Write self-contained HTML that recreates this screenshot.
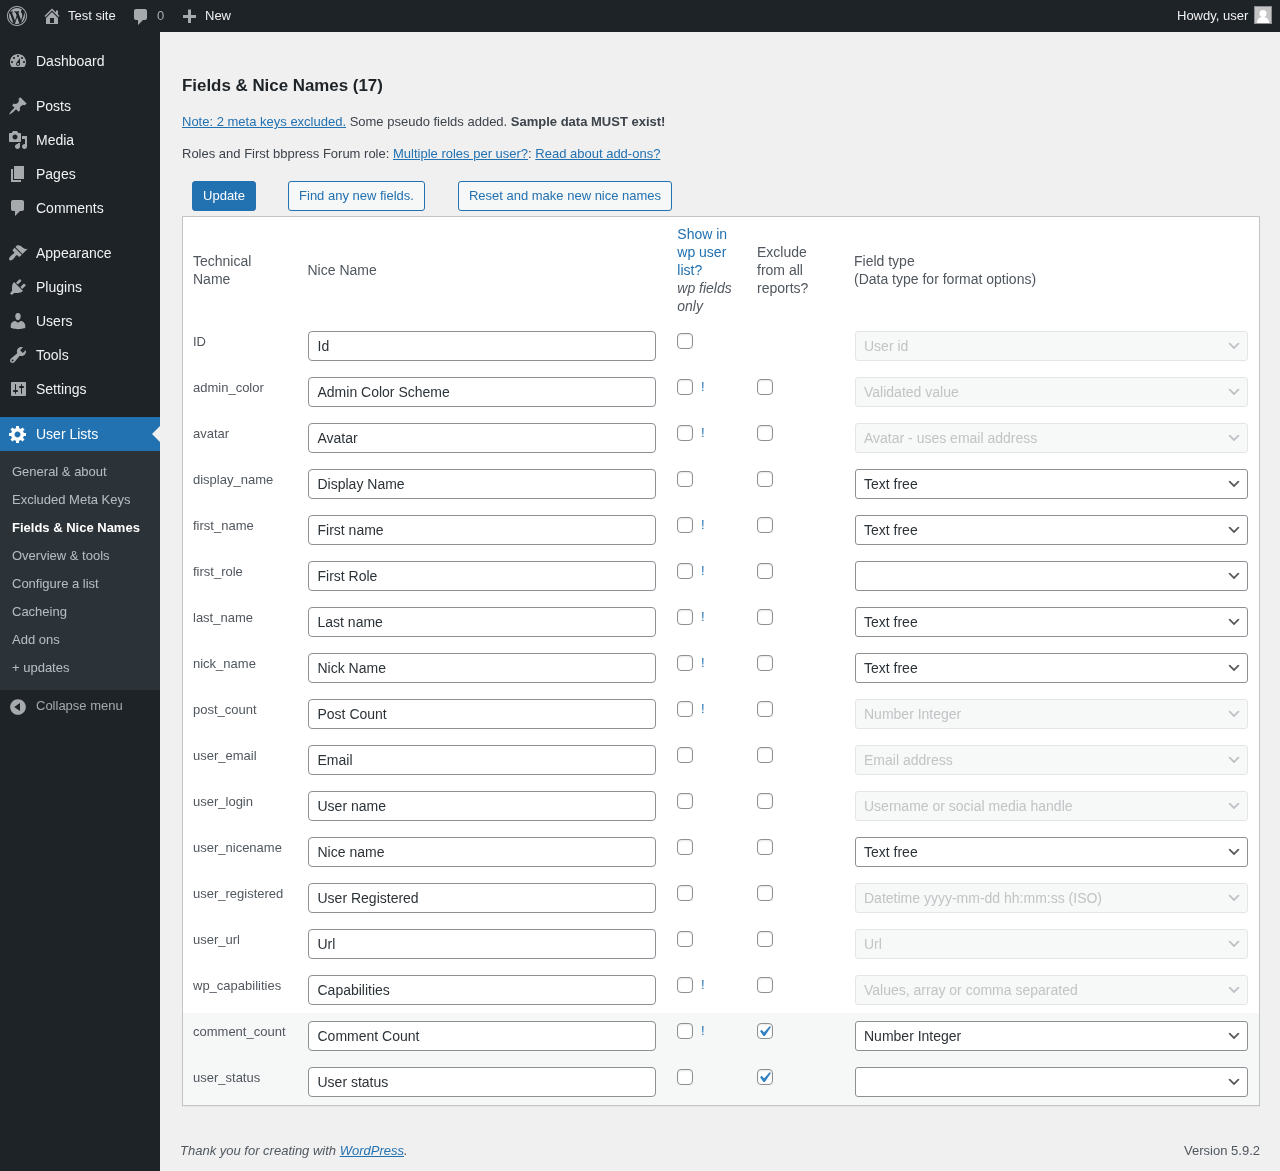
<!DOCTYPE html>
<html><head><meta charset="utf-8">
<style>
*{box-sizing:border-box}
html,body{margin:0;padding:0}
body{width:1280px;height:1171px;overflow:hidden;position:relative;background:#f0f0f1;font-family:"Liberation Sans",sans-serif;font-size:13px;color:#3c434a;}
.abs{position:absolute}
#bar{position:absolute;left:0;top:0;width:1280px;height:32px;background:#1d2327;color:#f0f0f1;font-size:13px;line-height:32px}
#side{position:absolute;left:0;top:32px;width:160px;height:1139px;background:#1d2327}
.mi{position:absolute;left:0;width:160px;height:34px;color:#f0f0f1;font-size:14px;line-height:18.2px}
.mi .t{position:absolute;left:36px;top:8px;white-space:nowrap}
.mi svg{position:absolute;left:8px;top:7px;width:20px;height:20px;fill:#a7aaad}
.sub{position:absolute;left:0;top:451px;width:160px;height:239px;background:#2c3338}
.si{position:absolute;left:12px;font-size:13px;line-height:18px;color:rgba(240,246,252,.7);white-space:nowrap}
a{color:#2271b1;text-decoration:underline}
.btn{position:absolute;top:181px;height:30px;border:1px solid #2271b1;border-radius:3px;background:#f6f7f7;color:#2271b1;font-size:13px;line-height:28px;text-align:center;white-space:nowrap}
.btn.pri{background:#2271b1;color:#fff}
#tbl{position:absolute;left:182px;top:216px;width:1078px;height:890px;border:1px solid #c3c4c7;background:#fff;box-shadow:0 1px 1px rgba(0,0,0,.04)}
.hd{position:absolute;line-height:18px;font-size:14px;color:#50575e;white-space:nowrap}
.row{position:absolute;left:0;width:1076px;height:46px}
.row.alt{background:#f6f7f7}
.tn{position:absolute;left:10px;top:9px;line-height:19.5px;color:#50575e;white-space:nowrap}
.inp{position:absolute;left:125px;top:8px;width:348px;height:30px;border:1px solid #8c8f94;border-radius:4px;background:#fff;color:#2c3338;font-size:14px;line-height:28px;padding-left:8.5px;white-space:nowrap}
.cb{position:absolute;top:10px;width:16px;height:16px;border:1px solid #8c8f94;border-radius:4px;background:#fff;box-shadow:inset 0 1px 2px rgba(0,0,0,.1)}
.cb svg{position:absolute;left:-4px;top:-3px;width:21px;height:21px}
.ex{position:absolute;left:518px;top:8px;color:#2271b1;line-height:19.5px;font-size:13px}
.sel{position:absolute;left:672px;top:8px;width:393px;height:30px;border:1px solid #8c8f94;border-radius:3px;background:#fff;color:#2c3338;font-size:14px;line-height:28px;padding-left:8px;white-space:nowrap}
.sel.dis{background:#f7f8f8;border-color:#e5e5e7;color:#c1c3c5}
.sel svg{position:absolute;right:5px;top:6px;width:16px;height:16px;fill:#555}
.sel.dis svg{fill:#bcbfc3}
</style></head><body>
<div id="root" style="position:absolute;left:0;top:0;width:1280px;height:1171px;will-change:transform">

<div id="bar">
  <svg class="abs" style="left:7px;top:6px;width:20px;height:20px;fill:#a7aaad" viewBox="0 0 20 20"><path d="M20 10c0-5.52-4.48-10-10-10S0 4.48 0 10s4.48 10 10 10 10-4.48 10-10zM10 1.01c4.97 0 8.99 4.02 8.99 8.99s-4.02 8.99-8.99 8.99S1.01 14.97 1.01 10 5.03 1.01 10 1.01zM8.01 14.82L4.96 6.61c.49-.03 1.050-.08 1.05-.08.43-.05.38-1.01-.06-.99 0 0-1.29.1-2.13.1-.15 0-.33 0-.52-.01 1.44-2.17 3.9-3.6 6.7-3.6 2.09 0 3.99.79 5.41 2.09-.6-.08-1.45.35-1.45 1.42 0 .66.38 1.22.79 1.88.31.54.5 1.22.5 2.21 0 1.34-1.27 4.48-1.27 4.480l-2.71-7.5c.48-.03.75-.16.75-.16.43-.05.38-1.1-.05-1.08 0 0-1.3.11-2.14.11-.78 0-2.11-.11-2.11-.11-.43-.02-.48 1.06-.05 1.08l.84.08 1.12 3.04zm6.02 2.15L16.64 10s.67-1.69.39-3.81c.63 1.14.94 2.42.94 3.81 0 2.96-1.56 5.58-3.94 6.97zM2.68 6.77L6.5 17.25c-2.67-1.3-4.47-4.08-4.47-7.25 0-1.16.2-2.23.65-3.23zm7.45 4.53l2.29 6.25c-.75.27-1.57.42-2.42.42-.72 0-1.41-.11-2.06-.3z"/></svg>
  <svg class="abs" style="left:42px;top:6px;width:20px;height:20px;fill:#a7aaad" viewBox="0 0 20 20"><path d="M16 8.5l1.53 1.53-1.06 1.06L10 4.62l-6.47 6.47-1.06-1.06L10 2.5l4 4v-2h2v4zm-6-2.46l6 5.99V18H4v-5.97zM12 17v-5H8v5h4z"/></svg>
  <span class="abs" style="left:68px;top:0">Test site</span>
  <svg class="abs" style="left:131px;top:7px;width:20px;height:20px;fill:#a7aaad" viewBox="0 0 20 20"><path d="M5 2h9c1.1 0 2 .9 2 2v7c0 1.1-.9 2-2 2h-2l-5 5v-5H5c-1.1 0-2-.9-2-2V4c0-1.1.9-2 2-2z"/></svg>
  <span class="abs" style="left:157px;top:0;color:#a7aaad">0</span>
  <svg class="abs" style="left:180px;top:6px;width:20px;height:20px;fill:#a7aaad" viewBox="0 0 20 20"><path d="M8 3.6h3v5.4h5v3h-5v5H8v-5H3V9h5z"/></svg>
  <span class="abs" style="left:205px;top:0">New</span>
  <span class="abs" style="left:1177px;top:0">Howdy, user</span>
  <div class="abs" style="left:1254px;top:6px;width:18px;height:18px;background:#c4c4c4;border:1px solid #8c8f94;overflow:hidden">
    <svg style="position:absolute;left:0;top:0;width:16px;height:16px" viewBox="0 0 16 16"><circle cx="8" cy="6.5" r="3.6" fill="#fff"/><path d="M2 16c0-4 2.5-6 6-6s6 2 6 6z" fill="#fff"/></svg>
  </div>
</div>

<div id="side"></div>
<!-- menu -->
<div class="mi" style="top:44px"><svg viewBox="0 0 20 20"><path d="M3.76 16h12.48c1.1-1.37 1.76-3.11 1.76-5 0-4.42-3.58-8-8-8s-8 3.58-8 8c0 1.89.66 3.63 1.76 5zM10 4c.55 0 1 .45 1 1s-.45 1-1 1-1-.45-1-1 .45-1 1-1zM6 6c.55 0 1 .45 1 1s-.45 1-1 1-1-.45-1-1 .45-1 1-1zm8 0c.55 0 1 .45 1 1s-.45 1-1 1-1-.45-1-1 .45-1 1-1zm-5.37 5.55L12 7v6c0 1.1-.9 2-2 2s-2-.9-2-2c0-.57.24-1.08.63-1.45zM4 10c.55 0 1 .45 1 1s-.45 1-1 1-1-.45-1-1 .45-1 1-1zm12 0c.55 0 1 .45 1 1s-.45 1-1 1-1-.45-1-1 .45-1 1-1zm-5 3c0-.55-.45-1-1-1s-1 .45-1 1 .45 1 1 1 1-.45 1-1z"/></svg><span class="t">Dashboard</span></div>
<div class="mi" style="top:89px"><svg viewBox="0 0 20 20"><path d="M10.44 3.02l1.82-1.82 6.36 6.35-1.83 1.82c-1.05-.68-2.48-.57-3.41.36l-.75.75c-.92.93-1.04 2.35-.35 3.410l-1.83 1.82-2.41-2.41-2.8 2.79c-.42.42-3.38 2.71-3.8 2.29s1.86-3.39 2.28-3.81l2.79-2.79L4.1 9.36l1.83-1.82c1.05.69 2.48.57 3.4-.36l.75-.75c.93-.92 1.05-2.35.36-3.41z"/></svg><span class="t">Posts</span></div>
<div class="mi" style="top:123px"><svg viewBox="0 0 20 20"><path d="M13 11V4c0-.55-.45-1-1-1h-1.67L9 1H5L3.67 3H2c-.55 0-1 .45-1 1v7c0 .55.45 1 1 1h10c.55 0 1-.45 1-1zM7 4.5c1.38 0 2.5 1.12 2.5 2.5S8.38 9.5 7 9.5 4.5 8.38 4.5 7 5.620 4.5 7 4.5zM14 6h5v10.5c0 1.38-1.12 2.5-2.5 2.5S14 17.88 14 16.5s1.12-2.5 2.5-2.5c.17 0 .34.02.5.05V9h-3V6zm-4 8.05V13h2v3.5c0 1.38-1.12 2.5-2.5 2.5S7 17.88 7 16.5 8.12 14 9.5 14c.17 0 .34.02.5.05z"/></svg><span class="t">Media</span></div>
<div class="mi" style="top:157px"><svg viewBox="0 0 20 20"><path d="M6 15V2h10v13H6zm-1 1h8v2H3V5h2v11z"/></svg><span class="t">Pages</span></div>
<div class="mi" style="top:191px"><svg viewBox="0 0 20 20"><path d="M5 2h9c1.1 0 2 .9 2 2v7c0 1.1-.9 2-2 2h-2l-5 5v-5H5c-1.1 0-2-.9-2-2V4c0-1.1.9-2 2-2z"/></svg><span class="t">Comments</span></div>
<div class="mi" style="top:236px"><svg viewBox="0 0 20 20"><path d="M14.48 11.06L7.41 3.99l1.5-1.5c.5-.56 2.3-.47 3.51.32 1.21.8 1.43 1.28 2.91 2.1 1.18.64 2.45 1.26 4.45.85zm-.71.71L6.7 4.7 4.93 6.47c-.39.39-.39 1.02 0 1.41l1.06 1.06c.39.39.39 1.03 0 1.42-.6.6-1.43 1.11-2.21 1.69-.35.26-.7.53-1.010.84C1.43 14.23.4 16.08 1.4 17.07c.99 1 2.84-.03 4.18-1.36.31-.31.58-.66.85-1.02.57-.78 1.08-1.61 1.69-2.21.39-.39 1.02-.39 1.41 0l1.06 1.06c.39.39 1.02.39 1.41 0z"/></svg><span class="t">Appearance</span></div>
<div class="mi" style="top:270px"><svg viewBox="0 0 20 20"><path d="M13.11 4.36L9.87 7.6 8 5.73l3.24-3.24c.35-.34 1.05-.2 1.56.32.52.51.66 1.21.31 1.55zm-8 1.77l.91-1.12 9.01 9.01-1.19.84c-.71.71-2.63 1.16-3.82 1.16H6.14L4.9 17.26c-.59.59-1.54.59-2.12 0-.59-.58-.59-1.53 0-2.12l1.24-1.24v-3.88c0-1.13.4-3.19 1.09-3.89zm7.26 3.97l3.24-3.24c.34-.35 1.04-.21 1.55.31.52.51.66 1.21.31 1.55l-3.24 3.25z"/></svg><span class="t">Plugins</span></div>
<div class="mi" style="top:304px"><svg viewBox="0 0 20 20"><path d="M10 9.25c-2.27 0-2.73-3.44-2.73-3.44C7 4.02 7.82 2 9.970 2c2.16 0 2.98 2.02 2.71 3.81 0 0-.41 3.44-2.68 3.44zm0 2.57L12.72 10c2.39 0 4.52 2.33 4.52 4.53v2.49s-3.65 1.13-7.24 1.13c-3.65 0-7.24-1.13-7.24-1.13v-2.49c0-2.25 1.94-4.48 4.47-4.48z"/></svg><span class="t">Users</span></div>
<div class="mi" style="top:338px"><svg viewBox="0 0 20 20"><path d="M16.68 9.77c-1.34 1.34-3.3 1.67-4.95.99l-5.41 6.52c-.99.99-2.59.99-3.58 0s-.99-2.59 0-3.57l6.52-5.42c-.68-1.65-.35-3.61.99-4.95 1.28-1.28 3.12-1.62 4.72-1.06l-2.89 2.89 2.82 2.82 2.86-2.87c.53 1.58.18 3.39-1.08 4.65zM3.81 16.21c.4.39 1.04.39 1.43 0 .4-.4.4-1.04 0-1.43-.39-.4-1.03-.4-1.43 0-.39.39-.39 1.03 0 1.43z"/></svg><span class="t">Tools</span></div>
<div class="mi" style="top:372px"><svg viewBox="0 0 20 20"><path d="M18 16V4c0-.55-.45-1-1-1H4c-.55 0-1 .45-1 1v12c0 .55.45 1 1 1h13c.55 0 1-.45 1-1zM8 11h1c.55 0 1 .45 1 1s-.45 1-1 1H8v1.5c0 .28-.22.5-.5.5s-.5-.22-.5-.5V13H6c-.55 0-1-.45-1-1s.45-1 1-1h1V5.5c0-.28.22-.5.5-.5s.5.22.5.5V11zm5-2h-1c-.55 0-1-.45-1-1s.45-1 1-1h1V5.5c0-.28.22-.5.5-.5s.5.22.5.5V7h1c.55 0 1 .45 1 1s-.45 1-1 1h-1v5.5c0 .28-.22.5-.5.5s-.5-.22-.5-.5V9z"/></svg><span class="t">Settings</span></div>
<div class="mi" style="top:417px;background:#2271b1"><svg viewBox="0 0 20 20" style="fill:#fff"><path d="M18 12h-2.18c-.17.7-.44 1.35-.81 1.93l1.54 1.54-2.1 2.1-1.54-1.54c-.58.36-1.23.63-1.91.79V19H8v-2.18c-.68-.16-1.33-.43-1.91-.79l-1.54 1.54-2.12-2.12 1.54-1.54c-.36-.58-.63-1.23-.79-1.91H1V9.03h2.17c.16-.7.44-1.35.8-1.94L2.43 5.55l2.1-2.1 1.54 1.54c.58-.37 1.24-.64 1.93-.81V2h3v2.18c.68.16 1.33.43 1.91.79l1.54-1.54 2.12 2.12-1.54 1.54c.36.59.64 1.24.8 1.94H18V12zm-8.5 1.5c1.66 0 3-1.34 3-3s-1.34-3-3-3-3 1.34-3 3 1.340 3 3 3z"/></svg><span class="t" style="color:#fff">User Lists</span>
  <div class="abs" style="right:0;top:9px;width:0;height:0;border:8px solid transparent;border-right-color:#f0f0f1;border-left:0"></div></div>
<div class="sub">
  <div class="si" style="top:12px">General &amp; about</div>
  <div class="si" style="top:40px">Excluded Meta Keys</div>
  <div class="si" style="top:68px;color:#fff;font-weight:700">Fields &amp; Nice Names</div>
  <div class="si" style="top:96px">Overview &amp; tools</div>
  <div class="si" style="top:124px">Configure a list</div>
  <div class="si" style="top:152px">Cacheing</div>
  <div class="si" style="top:180px">Add ons</div>
  <div class="si" style="top:208px">+ updates</div>
</div>
<svg class="abs" style="left:8px;top:697px;width:20px;height:20px;fill:#a7aaad" viewBox="0 0 20 20"><path d="M10 2.16c4.33 0 7.84 3.51 7.84 7.84s-3.51 7.84-7.84 7.84S2.16 14.33 2.16 10 5.71 2.16 10 2.16zm2 11.72V6.12L6.18 9.97z"/></svg>
<div class="abs" style="left:36px;top:697px;font-size:13px;line-height:18px;color:#a7aaad;white-space:nowrap">Collapse menu</div>

<!-- content -->
<div class="abs" style="left:182px;top:76px;font-size:16.9px;font-weight:700;line-height:20px;color:#1d2327;white-space:nowrap">Fields &amp; Nice Names (17)</div>
<div class="abs" style="left:182px;top:112px;line-height:19.5px;white-space:nowrap"><a>Note: 2 meta keys excluded.</a> Some pseudo fields added. <b>Sample data MUST exist!</b></div>
<div class="abs" style="left:182px;top:143.5px;line-height:19.5px;white-space:nowrap">Roles and First bbpress Forum role: <a>Multiple roles per user?</a>: <a>Read about add-ons?</a></div>

<div class="btn pri" style="left:192px;width:64px">Update</div>
<div class="btn" style="left:288px;width:137px">Find any new fields.</div>
<div class="btn" style="left:458px;width:214px">Reset and make new nice names</div>

<div id="tbl">
  <div class="hd" style="left:10px;top:34.7px">Technical<br>Name</div>
  <div class="hd" style="left:124.5px;top:43.7px">Nice Name</div>
  <div class="hd" style="left:494.3px;top:8.4px"><span style="color:#2271b1">Show in<br>wp user<br>list?</span><br><i>wp fields<br>only</i></div>
  <div class="hd" style="left:574px;top:26.3px">Exclude<br>from all<br>reports?</div>
  <div class="hd" style="left:671px;top:35.4px">Field type<br>(Data type for format options)</div>
  <!--ROWS-->
<div class="row" style="top:106px"><span class="tn">ID</span><div class="inp">Id</div><div class="cb" style="left:494px"></div><div class="sel dis">User id<svg viewBox="0 0 20 20"><path d="M5 6l5 5 5-5 2 1-7 7-7-7 2-1z"/></svg></div></div>
<div class="row" style="top:152px"><span class="tn">admin_color</span><div class="inp">Admin Color Scheme</div><div class="cb" style="left:494px"></div><span class="ex">!</span><div class="cb" style="left:574px"></div><div class="sel dis">Validated value<svg viewBox="0 0 20 20"><path d="M5 6l5 5 5-5 2 1-7 7-7-7 2-1z"/></svg></div></div>
<div class="row" style="top:198px"><span class="tn">avatar</span><div class="inp">Avatar</div><div class="cb" style="left:494px"></div><span class="ex">!</span><div class="cb" style="left:574px"></div><div class="sel dis">Avatar - uses email address<svg viewBox="0 0 20 20"><path d="M5 6l5 5 5-5 2 1-7 7-7-7 2-1z"/></svg></div></div>
<div class="row" style="top:244px"><span class="tn">display_name</span><div class="inp">Display Name</div><div class="cb" style="left:494px"></div><div class="cb" style="left:574px"></div><div class="sel">Text free<svg viewBox="0 0 20 20"><path d="M5 6l5 5 5-5 2 1-7 7-7-7 2-1z"/></svg></div></div>
<div class="row" style="top:290px"><span class="tn">first_name</span><div class="inp">First name</div><div class="cb" style="left:494px"></div><span class="ex">!</span><div class="cb" style="left:574px"></div><div class="sel">Text free<svg viewBox="0 0 20 20"><path d="M5 6l5 5 5-5 2 1-7 7-7-7 2-1z"/></svg></div></div>
<div class="row" style="top:336px"><span class="tn">first_role</span><div class="inp">First Role</div><div class="cb" style="left:494px"></div><span class="ex">!</span><div class="cb" style="left:574px"></div><div class="sel"><svg viewBox="0 0 20 20"><path d="M5 6l5 5 5-5 2 1-7 7-7-7 2-1z"/></svg></div></div>
<div class="row" style="top:382px"><span class="tn">last_name</span><div class="inp">Last name</div><div class="cb" style="left:494px"></div><span class="ex">!</span><div class="cb" style="left:574px"></div><div class="sel">Text free<svg viewBox="0 0 20 20"><path d="M5 6l5 5 5-5 2 1-7 7-7-7 2-1z"/></svg></div></div>
<div class="row" style="top:428px"><span class="tn">nick_name</span><div class="inp">Nick Name</div><div class="cb" style="left:494px"></div><span class="ex">!</span><div class="cb" style="left:574px"></div><div class="sel">Text free<svg viewBox="0 0 20 20"><path d="M5 6l5 5 5-5 2 1-7 7-7-7 2-1z"/></svg></div></div>
<div class="row" style="top:474px"><span class="tn">post_count</span><div class="inp">Post Count</div><div class="cb" style="left:494px"></div><span class="ex">!</span><div class="cb" style="left:574px"></div><div class="sel dis">Number Integer<svg viewBox="0 0 20 20"><path d="M5 6l5 5 5-5 2 1-7 7-7-7 2-1z"/></svg></div></div>
<div class="row" style="top:520px"><span class="tn">user_email</span><div class="inp">Email</div><div class="cb" style="left:494px"></div><div class="cb" style="left:574px"></div><div class="sel dis">Email address<svg viewBox="0 0 20 20"><path d="M5 6l5 5 5-5 2 1-7 7-7-7 2-1z"/></svg></div></div>
<div class="row" style="top:566px"><span class="tn">user_login</span><div class="inp">User name</div><div class="cb" style="left:494px"></div><div class="cb" style="left:574px"></div><div class="sel dis">Username or social media handle<svg viewBox="0 0 20 20"><path d="M5 6l5 5 5-5 2 1-7 7-7-7 2-1z"/></svg></div></div>
<div class="row" style="top:612px"><span class="tn">user_nicename</span><div class="inp">Nice name</div><div class="cb" style="left:494px"></div><div class="cb" style="left:574px"></div><div class="sel">Text free<svg viewBox="0 0 20 20"><path d="M5 6l5 5 5-5 2 1-7 7-7-7 2-1z"/></svg></div></div>
<div class="row" style="top:658px"><span class="tn">user_registered</span><div class="inp">User Registered</div><div class="cb" style="left:494px"></div><div class="cb" style="left:574px"></div><div class="sel dis">Datetime yyyy-mm-dd hh:mm:ss (ISO)<svg viewBox="0 0 20 20"><path d="M5 6l5 5 5-5 2 1-7 7-7-7 2-1z"/></svg></div></div>
<div class="row" style="top:704px"><span class="tn">user_url</span><div class="inp">Url</div><div class="cb" style="left:494px"></div><div class="cb" style="left:574px"></div><div class="sel dis">Url<svg viewBox="0 0 20 20"><path d="M5 6l5 5 5-5 2 1-7 7-7-7 2-1z"/></svg></div></div>
<div class="row" style="top:750px"><span class="tn">wp_capabilities</span><div class="inp">Capabilities</div><div class="cb" style="left:494px"></div><span class="ex">!</span><div class="cb" style="left:574px"></div><div class="sel dis">Values, array or comma separated<svg viewBox="0 0 20 20"><path d="M5 6l5 5 5-5 2 1-7 7-7-7 2-1z"/></svg></div></div>
<div class="row alt" style="top:796px"><span class="tn">comment_count</span><div class="inp">Comment Count</div><div class="cb" style="left:494px"></div><span class="ex">!</span><div class="cb" style="left:574px"><svg viewBox="0 0 20 20"><path d="M14.83 4.89l1.34.94-5.81 8.38H9.02L5.78 9.67l1.34-1.25 2.57 2.4z" fill="#3582c4"/></svg></div><div class="sel">Number Integer<svg viewBox="0 0 20 20"><path d="M5 6l5 5 5-5 2 1-7 7-7-7 2-1z"/></svg></div></div>
<div class="row alt" style="top:842px"><span class="tn">user_status</span><div class="inp">User status</div><div class="cb" style="left:494px"></div><div class="cb" style="left:574px"><svg viewBox="0 0 20 20"><path d="M14.83 4.89l1.34.94-5.81 8.38H9.02L5.78 9.67l1.34-1.25 2.57 2.4z" fill="#3582c4"/></svg></div><div class="sel"><svg viewBox="0 0 20 20"><path d="M5 6l5 5 5-5 2 1-7 7-7-7 2-1z"/></svg></div></div>
<!--/ROWS-->
</div>

<div class="abs" style="left:180px;top:1141px;line-height:20px;font-style:italic;color:#50575e;white-space:nowrap">Thank you for creating with <a>WordPress</a>.</div>
<div class="abs" style="right:20px;top:1141px;line-height:20px;color:#50575e;white-space:nowrap">Version 5.9.2</div>
</div>
</body></html>
